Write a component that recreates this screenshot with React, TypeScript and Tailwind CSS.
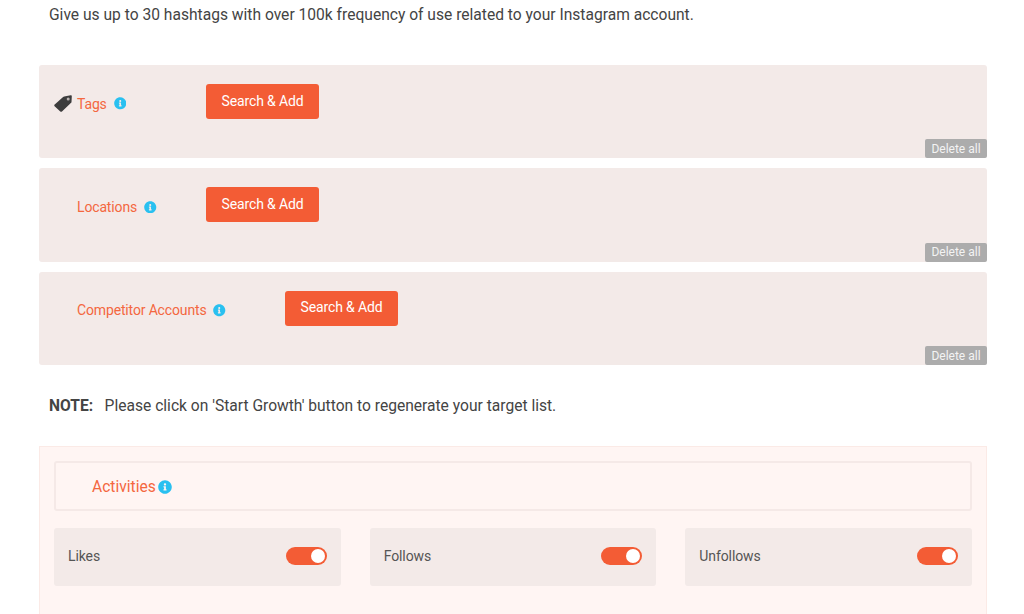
import { FaInfoCircle } from "react-icons/fa";

function TagIcon() {
  return (
    <svg viewBox="0 0 18 18" className="h-[18px] w-[18px] text-[#3d3d3d]">
      <path
        fill="currentColor"
        d="M10.2 1.4 16.6 0.3c0.7-0.1 1.2 0.3 1.2 1l-0.3 5.6c0 0.3-0.1 0.6-0.4 0.8L8 16.4c-0.5 0.5-1.2 0.5-1.7 0L0.6 11.2c-0.5-0.5-0.5-1.3 0.1-1.7l8.7-7.7c0.2-0.2 0.5-0.3 0.8-0.4Z"
      />
      <circle cx="14.2" cy="4" r="1.5" fill="#b9b3b1" />
    </svg>
  );
}

function TargetPanel({
  label,
  hasIcon,
  labelWidth,
}: {
  label: string;
  hasIcon?: boolean;
  labelWidth: string;
}) {
  return (
    <div className="relative h-[93.4px] rounded-[3px] bg-[#f3eae8] pl-[15px] pt-[19px]">
      <div className="flex items-start">
        <div className={`flex h-[39px] items-center ${labelWidth}`}>
          <div className="flex w-[23px] shrink-0 items-center">{hasIcon && <TagIcon />}</div>
          <span className="text-sm tracking-[-0.15px] text-[#f4673f]">{label}</span>
          <FaInfoCircle className="ml-[7px] text-[12.5px] text-[#29c0f0]" />
        </div>
        <button className="h-[35px] w-[113px] rounded-[3px] bg-[#f35c35] pb-[2px] text-sm tracking-[-0.15px] text-white">
          Search &amp; Add
        </button>
      </div>
      <button className="absolute bottom-0 right-0 h-[19px] w-[62px] rounded-[2px] bg-[#acacac] text-xs text-[#f3f3f3]">
        Delete all
      </button>
    </div>
  );
}

function ActivityCard({ label }: { label: string }) {
  return (
    <div className="flex h-[58px] items-center justify-between rounded-[3px] bg-[#f3eae8] px-[14px] pb-[2px]">
      <span className="text-sm tracking-[-0.1px] text-[#555555]">{label}</span>
      <div className="flex h-[18px] w-[41px] items-center justify-end rounded-full bg-[#f35c35] pr-[2px]">
        <div className="h-[14px] w-[14px] rounded-full bg-white" />
      </div>
    </div>
  );
}

export default function App() {
  return (
    <div className="h-[614px] w-[1024px] overflow-hidden bg-white font-['Roboto',sans-serif]">
      <div className="pl-[49px] pr-[37px]">
        <p className="h-[65px] pt-[5px] text-[15.6px] leading-[20px] text-[#444444]">
          Give us up to 30 hashtags with over 100k frequency of use related to your Instagram account.
        </p>
      </div>
      <div className="ml-[39px] mr-[37px] flex flex-col gap-[10px]">
        <TargetPanel label="Tags" hasIcon labelWidth="w-[152px]" />
        <TargetPanel label="Locations" labelWidth="w-[152px]" />
        <TargetPanel label="Competitor Accounts" labelWidth="w-[231px]" />
      </div>
      <p className="ml-[49px] mt-[31px] h-[50px] text-[15.6px] leading-[20px] text-[#444444]">
        <strong className="mr-[11.5px] font-bold">NOTE:</strong>
        Please click on 'Start Growth' button to regenerate your target list.
      </p>
      <div className="ml-[39px] mr-[37px] h-[200px] border border-[#fbeae6] bg-[#fff5f3] px-[14px] pt-[14px]">
        <div className="flex h-[50px] items-center rounded-[3px] border-2 border-[#f5e9e7] pl-[36px] pt-[3px]">
          <span className="text-[15.6px] text-[#f4673f]">Activities</span>
          <FaInfoCircle className="mb-[2px] ml-[2.5px] text-[14px] text-[#29c0f0]" />
        </div>
        <div className="mt-[17px] grid grid-cols-3 gap-[29px]">
          <ActivityCard label="Likes" />
          <ActivityCard label="Follows" />
          <ActivityCard label="Unfollows" />
        </div>
      </div>
    </div>
  );
}
